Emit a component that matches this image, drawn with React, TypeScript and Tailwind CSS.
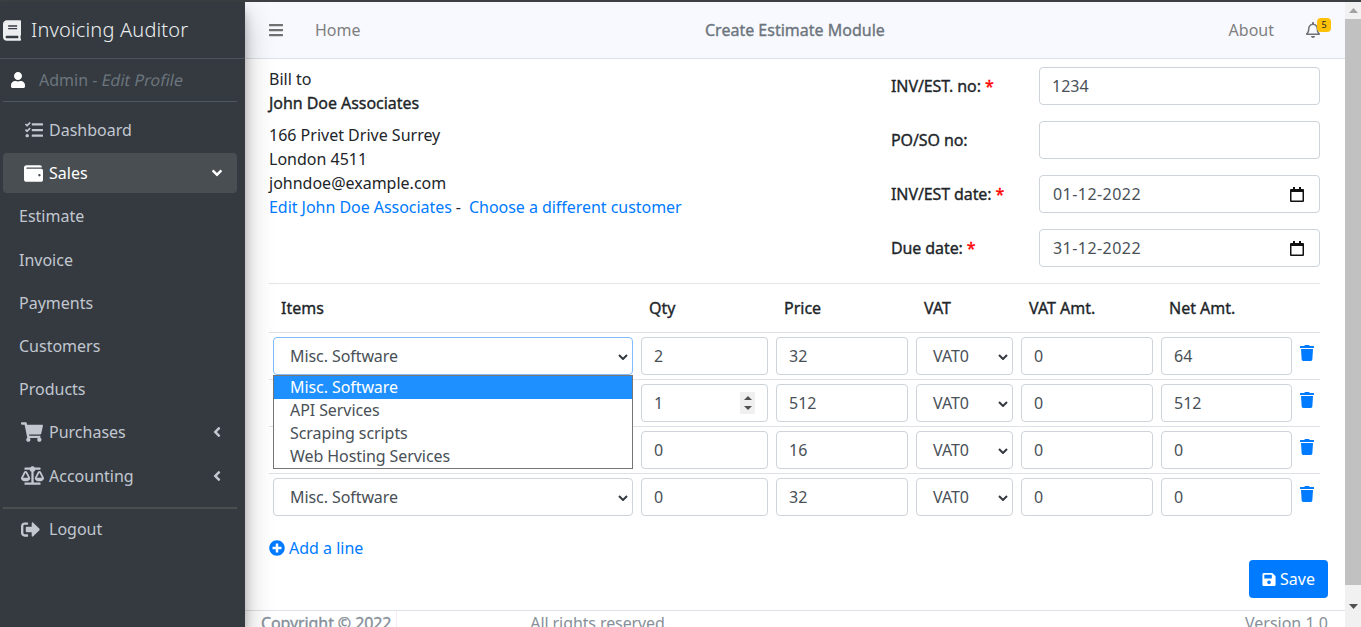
import { FC, ReactNode } from 'react';
import {
  FaAngleDown,
  FaAngleLeft,
  FaBalanceScale,
  FaBars,
  FaBook,
  FaPlusCircle,
  FaRegBell,
  FaSave,
  FaShoppingCart,
  FaSignOutAlt,
  FaTasks,
  FaTrash,
  FaUser,
  FaWallet,
} from 'react-icons/fa';

const rows = [
  { item: 'Misc. Software', qty: '2', price: '32', vatAmt: '0', net: '64' },
  { item: 'API Services', qty: '1', price: '512', vatAmt: '0', net: '512' },
  { item: 'Scraping scripts', qty: '0', price: '16', vatAmt: '0', net: '0' },
  { item: 'Misc. Software', qty: '0', price: '32', vatAmt: '0', net: '0' },
];

const options = ['Misc. Software', 'API Services', 'Scraping scripts', 'Web Hosting Services'];

// the reference's bold is a thickened regular, so the widths stay those of the regular face
const thick = '[-webkit-text-stroke:0.35px_currentColor]';

const Chevron: FC = () => (
  <svg width="10" height="6" viewBox="0 0 10 6" className="absolute top-[16px] right-[4px]">
    <path d="M1 1l4 4 4-4" fill="none" stroke="#343a40" strokeWidth="2" />
  </svg>
);

const Select: FC<{ value: string; focused?: boolean }> = ({ value, focused }) => (
  <div
    className={`relative h-[38px] rounded-[4px] border bg-white pl-4 leading-[36px] tracking-[-0.08px] text-[#495057] ${
      focused ? 'border-[#80bdff]' : 'border-[#ced4da]'
    }`}
  >
    {value}
    <Chevron />
  </div>
);

const Field: FC<{ value?: string; className?: string; children?: ReactNode }> = ({ value, className, children }) => (
  <div className={`relative h-[38px] rounded-[4px] border border-[#ced4da] bg-white px-3 leading-[36px] text-[#495057] ${className ?? ''}`}>
    {value}
    {children}
  </div>
);

const Calendar: FC = () => (
  <svg width="14" height="15" viewBox="0 0 14 15" className="absolute top-[11px] right-[15px]">
    <path d="M3 0h2v2h4V0h2v2h2a1 1 0 0 1 1 1v11a1 1 0 0 1-1 1H1a1 1 0 0 1-1-1V3a1 1 0 0 1 1-1h2z" fill="#111" />
    <rect x="1.5" y="5" width="11" height="8.5" fill="#fff" />
  </svg>
);

const Spinner: FC = () => (
  <div className="absolute top-[7px] right-[12px] flex h-[22px] w-[15px] flex-col items-center justify-center gap-[6px] bg-[#f0f0f0]">
    <svg width="8" height="4" viewBox="0 0 8 4">
      <path d="M4 0l4 4H0z" fill="#505050" />
    </svg>
    <svg width="8" height="4" viewBox="0 0 8 4">
      <path d="M4 4L0 0h8z" fill="#505050" />
    </svg>
  </div>
);

const FormRow: FC<{ label: string; required?: boolean; children: ReactNode }> = ({ label, required, children }) => (
  <div className="grid h-[38px] grid-cols-[148px_281px] items-center">
    <label className={`tracking-[-0.1px] text-[#212529] ${thick}`}>
      {label} {required && <span className="text-[#ff0000]">*</span>}
    </label>
    <div>{children}</div>
  </div>
);

const NavItem: FC<{ icon: ReactNode; label: string; arrow?: ReactNode; active?: boolean; className?: string }> = ({
  icon,
  label,
  arrow,
  active,
  className,
}) => (
  <div className={`flex items-center ${active ? 'rounded-[4px] bg-[#494e53] text-white' : 'text-[#c2c7d0]'} ${className ?? ''}`}>
    <span className={`flex justify-end ${active ? 'w-[46px] pr-[6px]' : 'w-[49px] pr-[6px]'}`}>{icon}</span>
    <span>{label}</span>
    {arrow && <span className={`ml-auto ${active ? 'mr-[15px]' : 'mr-[23px]'}`}>{arrow}</span>}
  </div>
);

const gridCols = 'grid grid-cols-[368px_135px_140px_105px_140px_139px_24px]';

const App: FC = () => {
  return (
    <div className="flex h-[627px] w-[1361px] flex-col overflow-hidden bg-white font-['Noto_Sans',sans-serif] text-base">
      <div className="h-[2px] shrink-0 bg-[#3c4043]" />
      <div className="flex min-h-0 flex-1">
        <aside className="z-10 flex w-[245px] shrink-0 flex-col bg-[#343a40] shadow-[0_14px_28px_rgba(0,0,0,0.25),0_10px_10px_rgba(0,0,0,0.22)]">
          <div className="flex h-[57px] shrink-0 items-center gap-[10px] border-b border-[#4b545c] pl-[3px] text-[20px] font-light tracking-[0.17px] text-[#eceef0]">
            <FaBook className="h-[21px] w-[18px]" />
            <span>Invoicing Auditor</span>
          </div>
          <div className="mx-[3px] mr-[8px] flex h-[43px] shrink-0 items-center border-b border-[#4f5962] pl-[8px] text-[#6c757d]">
            <FaUser className="mr-[14px] h-[16px] w-[14px] text-white" />
            <span>
              Admin - <span className="inline-block -skew-x-12">Edit Profile</span>
            </span>
          </div>
          <nav className="mt-[7px] flex flex-col">
            <NavItem icon={<FaTasks className="h-[18px] w-[18px]" />} label="Dashboard" className="h-[44px] pb-[2px]" />
            <NavItem
              active
              icon={<FaWallet className="h-[19px] w-[19px]" />}
              label="Sales"
              arrow={<FaAngleDown className="h-[16px] w-[10px]" />}
              className="mr-[8px] ml-[3px] h-[40px]"
            />
            <div className="flex flex-col pl-[19px] text-[#c2c7d0]">
              <span className="flex h-[45px] items-center">Estimate</span>
              <span className="flex h-[43px] items-center">Invoice</span>
              <span className="flex h-[43px] items-center">Payments</span>
              <span className="flex h-[43px] items-center">Customers</span>
              <span className="flex h-[43px] items-center">Products</span>
            </div>
            <NavItem
              icon={<FaShoppingCart className="h-[20px] w-[22px]" />}
              label="Purchases"
              arrow={<FaAngleLeft className="h-[16px] w-[10px]" />}
              className="h-[43px]"
            />
            <NavItem
              icon={<FaBalanceScale className="h-[19px] w-[23px]" />}
              label="Accounting"
              arrow={<FaAngleLeft className="h-[16px] w-[10px]" />}
              className="mt-[1px] h-[43px] [&>span:first-child]:pr-[5px]"
            />
            <div className="mt-[10px] mr-[8px] ml-[3px] h-[2px] bg-[#4b4f50]" />
            <NavItem icon={<FaSignOutAlt className="h-[19px] w-[19px]" />} label="Logout" className="h-[40px] [&>span:first-child]:pr-[9px]" />
          </nav>
        </aside>

        <main className="flex min-w-0 flex-1 flex-col">
          <header className="relative flex h-[57px] shrink-0 items-center border-b border-[#dee2e6] bg-[#f8f9fe] pl-[24px] text-[#7f7f7f]">
            <FaBars className="h-[16px] w-[14px] text-[#6f7173]" />
            <span className="ml-[32px]">Home</span>
            <span className={`absolute left-[460px] text-[#6c757d] ${thick}`}>Create Estimate Module</span>
            <span className="mr-[31px] ml-auto">About</span>
            <span className="relative mr-[24px] block h-[16px] w-[16px]">
              <FaRegBell className="h-[16px] w-[16px] text-[#6f7173]" />
              <span className="absolute -top-[4px] left-[12px] flex h-[14px] w-[14px] items-center justify-center rounded-[4px] bg-[#ffc107] text-[9px] text-[#212529]">
                5
              </span>
            </span>
          </header>

          <div className="flex min-h-0 flex-1 flex-col pr-[25px] pl-[24px]">
            <div className="flex h-[225px] shrink-0 justify-between border-b border-[#e3e5e8] pt-[8px]">
              <div className="leading-[24px] text-[#212529]">
                <div>Bill to</div>
                <div className={`tracking-[-0.05px] ${thick}`}>John Doe Associates</div>
                <div className="mt-[8px]">166 Privet Drive Surrey</div>
                <div>London 4511</div>
                <div>johndoe@example.com</div>
                <div className="flex tracking-[-0.04px]">
                  <a className="text-[#007bff]">Edit John Doe Associates</a>
                  <span className="ml-[4px] text-[#212529]">-</span>
                  <a className="ml-[8px] text-[#007bff]">Choose a different customer</a>
                </div>
              </div>
              <div className="flex flex-col gap-[16px]">
                <FormRow label="INV/EST. no:" required>
                  <Field value="1234" />
                </FormRow>
                <FormRow label="PO/SO no:">
                  <Field />
                </FormRow>
                <FormRow label="INV/EST date:" required>
                  <Field value="01-12-2022" className="pl-[13px] tracking-[0.45px]">
                    <Calendar />
                  </Field>
                </FormRow>
                <FormRow label="Due date:" required>
                  <Field value="31-12-2022" className="pl-[13px] tracking-[0.45px]">
                    <Calendar />
                  </Field>
                </FormRow>
              </div>
            </div>

            <div className="relative">
              <div className={`${gridCols} h-[49px] items-center border-b border-[#dee2e6] text-[#212529] ${thick}`}>
                <span className="pl-[12px]">Items</span>
                <span className="pl-[12px]">Qty</span>
                <span className="pl-[12px]">Price</span>
                <span className="pl-[12px]">VAT</span>
                <span className="pl-[12px]">VAT Amt.</span>
                <span className="pl-[12px]">Net Amt.</span>
                <span />
              </div>
              {rows.map((row, i) => (
                <div key={i} className={`${gridCols} h-[47px] pt-[4px] ${i < rows.length - 1 ? 'border-b border-[#dee2e6]' : ''}`}>
                  <div className="px-[4px]">
                    <Select value={row.item} focused={i === 0} />
                  </div>
                  <div className="px-[4px]">
                    <Field value={row.qty}>{i === 1 && <Spinner />}</Field>
                  </div>
                  <div className="px-[4px]">
                    <Field value={row.price} />
                  </div>
                  <div className="px-[4px]">
                    <Select value="VAT0" />
                  </div>
                  <div className="px-[4px]">
                    <Field value={row.vatAmt} />
                  </div>
                  <div className="px-[4px]">
                    <Field value={row.net} />
                  </div>
                  <div className="pt-[8px] pl-[4px]">
                    <FaTrash className="h-[16px] w-[14px] text-[#007bff]" />
                  </div>
                </div>
              ))}
              <ul className="absolute top-[91px] left-[4px] w-[360px] border border-[#767676] bg-white tracking-[-0.08px] text-[#495057]">
                {options.map((opt, i) => (
                  <li key={opt} className={`h-[23px] pl-[16px] leading-[23px] ${i === 0 ? 'bg-[#1e90ff] text-white' : ''}`}>
                    {opt}
                  </li>
                ))}
              </ul>
            </div>

            <div className="mt-[15px] flex items-center gap-[4px] text-[#007bff]">
              <FaPlusCircle className="h-[16px] w-[16px]" />
              <span>Add a line</span>
            </div>
            <div className="-mr-[8px] flex justify-end">
              <button className="flex h-[38px] w-[79px] items-center justify-center gap-[4px] rounded-[4px] bg-[#007bff] text-white">
                <FaSave className="h-[15px] w-[14px]" />
                Save
              </button>
            </div>
          </div>

          <footer className="flex h-[17px] shrink-0 justify-between overflow-hidden border-t border-[#dee2e6] pr-[17px] pl-[16px] text-[#869099]">
            <span className="flex tracking-[-0.1px]">
              <span className={thick}>Copyright © 2022</span>
              <span className="ml-[5px] h-[16px] w-[1px] bg-[#f8e8f8]" />
              <span className="ml-[133px]">All rights reserved.</span>
            </span>
            <span>Version 1.0</span>
          </footer>
        </main>

        <div className="flex w-[16px] shrink-0 flex-col bg-[#f1f1f1]">
          <div className="flex h-[17px] items-center justify-center">
            <svg width="9" height="5" viewBox="0 0 9 5">
              <path d="M4.5 0L9 5H0z" fill="#a3a3a3" />
            </svg>
          </div>
          <div className="h-[566px] bg-[#c1c1c1]" />
          <div className="flex flex-1 items-center justify-center">
            <svg width="9" height="5" viewBox="0 0 9 5">
              <path d="M4.5 5L0 0h9z" fill="#505050" />
            </svg>
          </div>
        </div>
      </div>
    </div>
  );
};

export default App;
